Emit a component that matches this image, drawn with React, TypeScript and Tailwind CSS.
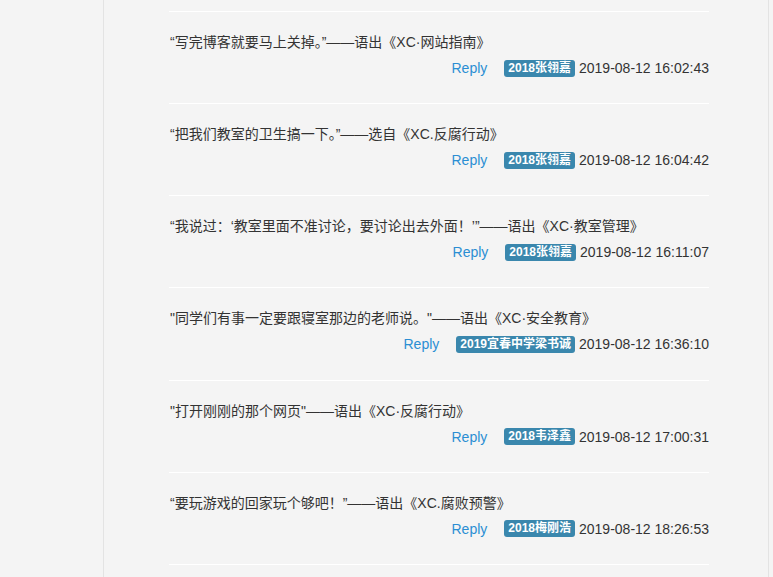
import React from "react";

type Comment = {
  text: string;
  author: string;
  time: string;
};

const comments: Comment[] = [
  { text: "“写完博客就要马上关掉。”——语出《XC·网站指南》", author: "2018张翎嘉", time: "2019-08-12 16:02:43" },
  { text: "“把我们教室的卫生搞一下。”——选自《XC.反腐行动》", author: "2018张翎嘉", time: "2019-08-12 16:04:42" },
  { text: "“我说过：‘教室里面不准讨论，要讨论出去外面！’”——语出《XC·教室管理》", author: "2018张翎嘉", time: "2019-08-12 16:11:07" },
  { text: "\"同学们有事一定要跟寝室那边的老师说。\"——语出《XC·安全教育》", author: "2019宜春中学梁书诚", time: "2019-08-12 16:36:10" },
  { text: "\"打开刚刚的那个网页\"——语出《XC·反腐行动》", author: "2018韦泽鑫", time: "2019-08-12 17:00:31" },
  { text: "“要玩游戏的回家玩个够吧！”——语出《XC.腐败预警》", author: "2018梅刚浩", time: "2019-08-12 18:26:53" },
];

const font = "font-['Liberation_Sans','Noto_Sans_CJK_SC',sans-serif]";

export default function App() {
  return (
    <div className={`flex h-[577px] w-[773px] overflow-hidden bg-[#f4f4f4] text-[14px] text-[#333] ${font}`}>
      {/* left gutter */}
      <div className="w-[103px] shrink-0" />

      {/* comment column */}
      <div className="w-[666px] shrink-0 border-x border-[#e3e3e3] pl-[65px]">
        <div className="h-[11px]" />
        <div className="w-[540px]">
          {comments.map((c, i) => (
            <div key={i} className="h-[92.17px] border-t border-white pt-[20px]">
              <p className="h-[20px] leading-[20px] pl-px">{c.text}</p>
              <div className="mt-[6px] flex h-[20px] items-center justify-end">
                <a href="#" className="mr-[17px] text-[#2b8ed3] leading-[20px]">
                  Reply
                </a>
                <span className="rounded-[3px] bg-[#3a87ad] px-[4px] py-[2px] text-[12px] font-bold leading-[13px] text-white">
                  {c.author}
                </span>
                <span className="ml-[4px] leading-[20px]">{c.time}</span>
              </div>
            </div>
          ))}
          <div className="h-[20px] border-t border-white" />
        </div>
      </div>
    </div>
  );
}
